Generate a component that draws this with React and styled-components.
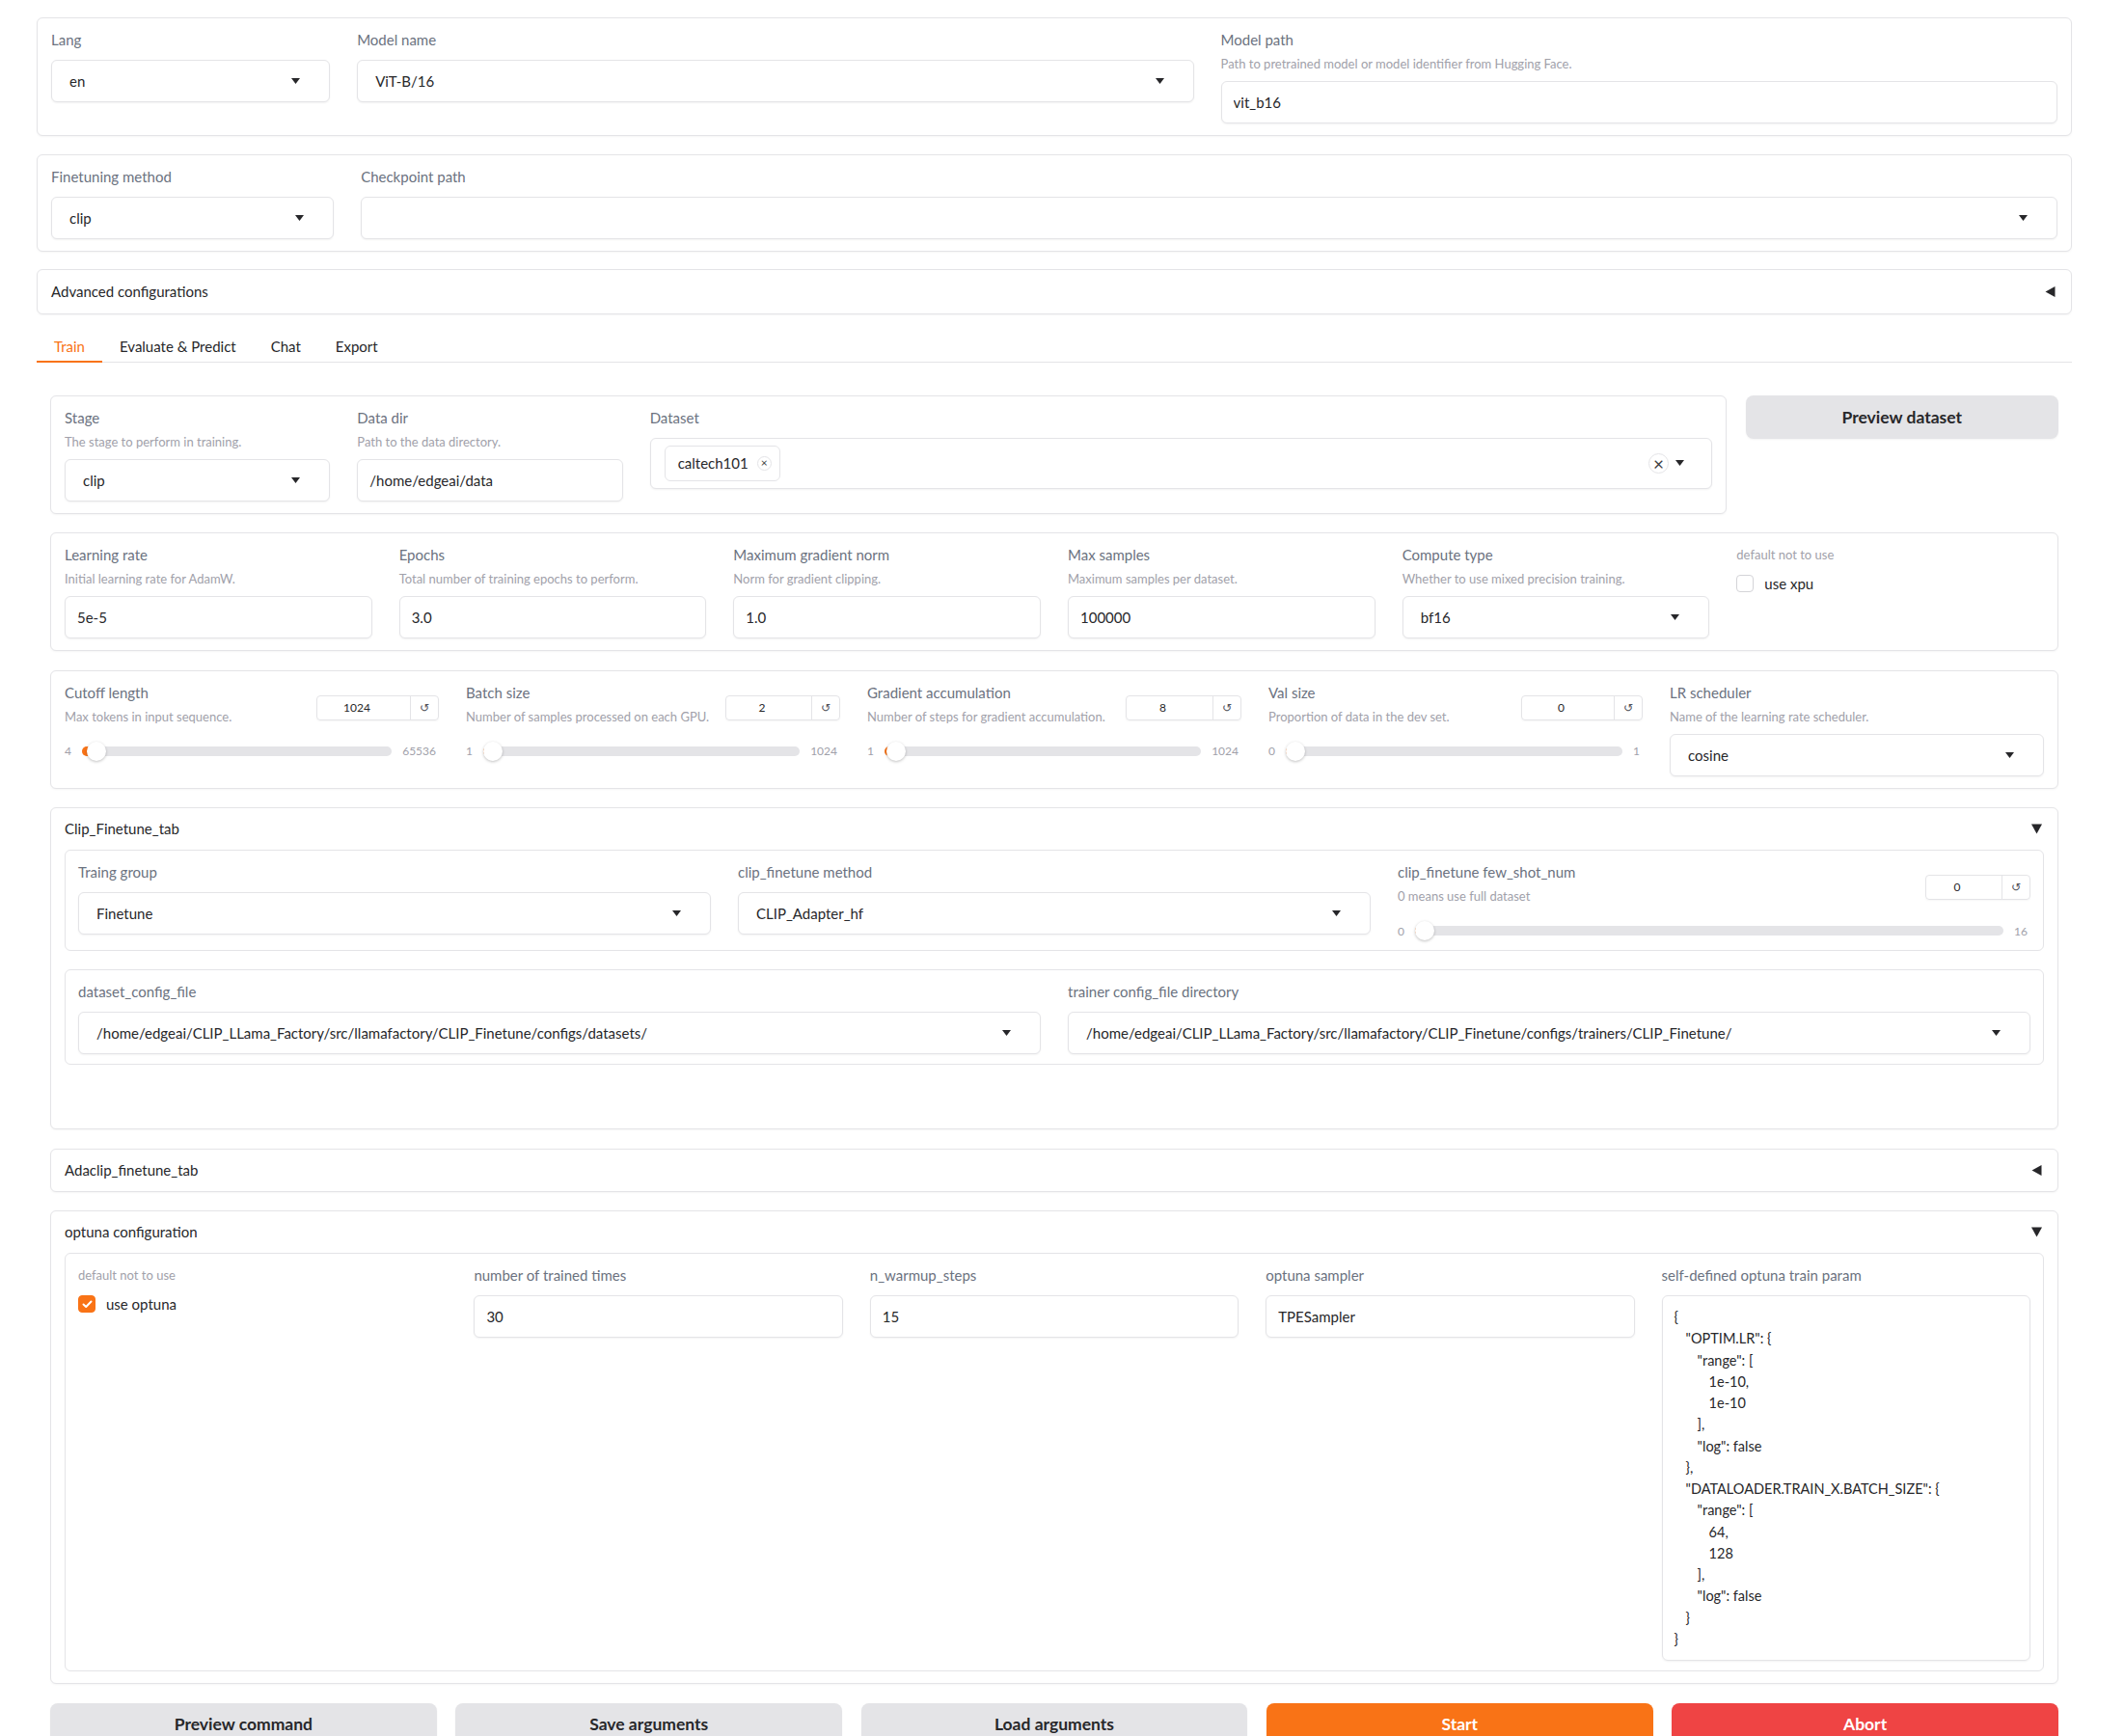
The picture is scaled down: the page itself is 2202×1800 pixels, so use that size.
import React from 'react';
import styled, { createGlobalStyle } from 'styled-components';

const colors = {
  border: '#e4e4e7',
  label: '#6b7280',
  info: '#a1a1aa',
  text: '#27272a',
  orange: '#f97316',
  red: '#ef4444',
  secondary: '#e4e4e7',
};

const GlobalStyle = createGlobalStyle`
  html, body {
    margin: 0;
    padding: 0;
    background: #fff;
  }
  body {
    font-family: Lato, "Liberation Sans", sans-serif;
    color: ${colors.text};
  }
  * {
    box-sizing: border-box;
  }
`;

const Page = styled.div`
  width: 2202px;
  padding: 18px 54px 30px 38px;
  display: flex;
  flex-direction: column;
  gap: 18.5px;
`;

const Panel = styled.div`
  background: #fff;
  border: 1px solid ${colors.border};
  border-radius: 6px;
  box-shadow: 0 1px 2px rgba(0, 0, 0, 0.04);
  padding: 12px 14px;
  display: grid;
  grid-template-columns: ${(p) => p.$cols};
  column-gap: 28px;
  align-items: start;
  flex: ${(p) => (p.$grow ? 1 : 'none')};
`;

const Field = styled.div`
  display: flex;
  flex-direction: column;
  min-width: 0;
`;

const Label = styled.div`
  font-size: ${(p) => (p.$faint ? 13 : 15)}px;
  line-height: 20px;
  color: ${(p) => (p.$faint ? colors.info : colors.label)};
  margin-bottom: ${(p) => (p.$info ? 7 : p.$faint ? 0 : 11)}px;
  white-space: nowrap;
`;

const Info = styled.div`
  font-size: 13px;
  line-height: 16px;
  color: ${colors.info};
  margin-bottom: 10px;
  white-space: nowrap;
`;

const InputBox = styled.div`
  height: 44px;
  background: #fff;
  border: 1px solid ${colors.border};
  border-radius: 6px;
  box-shadow: 0 1px 2px rgba(0, 0, 0, 0.05);
  display: flex;
  align-items: center;
  padding: ${(p) => (p.$select ? '0 30px 0 18px' : '0 12px')};
  font-size: 15px;
  color: ${colors.text};
  white-space: nowrap;
  overflow: hidden;
`;

const Value = styled.span`
  flex: 1;
  overflow: hidden;
  text-overflow: ellipsis;
`;

const MultiBox = styled(InputBox)`
  height: 53px;
  padding: 0 28px 0 14px;
  gap: 7px;
`;

const Chip = styled.div`
  height: 37px;
  display: flex;
  align-items: center;
  gap: 9px;
  padding: 0 8px 0 13px;
  border: 1px solid ${colors.border};
  border-radius: 6px;
  font-size: 15px;
`;

const RoundX = styled.span`
  width: ${(p) => p.$size}px;
  height: ${(p) => p.$size}px;
  border: 1px solid ${colors.border};
  border-radius: 50%;
  display: flex;
  align-items: center;
  justify-content: center;
  font-size: ${(p) => (p.$size > 16 ? 19 : 12)}px;
  line-height: 1;
  color: #3f3f46;
`;

const Spacer = styled.div`
  flex: 1;
`;

const Caret = () => (
  <svg width="9" height="6" viewBox="0 0 9 6">
    <polygon points="0,0 9,0 4.5,6" fill="#27272a" />
  </svg>
);

const TriWrap = styled.span`
  display: flex;
  transform: rotate(${(p) => (p.$open ? 0 : 90)}deg);
`;

const Tri = ({ open }) => (
  <TriWrap $open={open}>
    <svg width="11" height="11" viewBox="0 0 11 11">
      <polygon points="0,0.5 11,0.5 5.5,10.5" fill="#27272a" />
    </svg>
  </TriWrap>
);

const Accordion = styled.div`
  background: #fff;
  border: 1px solid ${colors.border};
  border-radius: 6px;
  box-shadow: 0 1px 2px rgba(0, 0, 0, 0.04);
`;

const AccHead = styled.div`
  display: flex;
  justify-content: space-between;
  align-items: center;
  padding: ${(p) => (p.$roomy ? 12 : 11)}px 16px ${(p) => (p.$roomy ? 12 : 11)}px 14px;
  font-size: 15px;
  line-height: 21px;
  color: ${colors.text};
`;

const AccBody = styled.div`
  padding: 0 14px 12px;
  display: flex;
  flex-direction: column;
  gap: 19px;
`;

const Group = styled.div`
  border: 1px solid ${colors.border};
  border-radius: 6px;
  padding: 12px 13px 10px;
  display: grid;
  grid-template-columns: ${(p) => p.$cols};
  column-gap: 28px;
  align-items: start;
`;

const Filler = styled.div`
  height: 35px;
`;

const Tabs = styled.div`
  display: flex;
  flex-direction: column;
`;

const TabBar = styled.div`
  display: flex;
  height: 31px;
  border-bottom: 1px solid ${colors.border};
`;

const Tab = styled.div`
  padding: 0 18px;
  height: 31px;
  line-height: 28px;
  font-size: 15px;
  color: ${(p) => (p.$active ? colors.orange : colors.text)};
  border-bottom: 2px solid ${(p) => (p.$active ? colors.orange : 'transparent')};
  margin-bottom: -1px;
`;

const TabPanel = styled.div`
  padding: 34px 14px 0 14px;
  display: flex;
  flex-direction: column;
  gap: 19.5px;
`;

const TopRow = styled.div`
  display: flex;
  gap: 19.5px;
  align-items: flex-start;
`;

const Button = styled.div`
  height: ${(p) => (p.$tall ? 45 : 44)}px;
  width: ${(p) => (p.$w ? `${p.$w}px` : 'auto')};
  border-radius: 8px;
  display: flex;
  align-items: center;
  justify-content: center;
  font-size: 17.5px;
  font-weight: 700;
  background: ${(p) =>
    p.$variant === 'primary' ? colors.orange : p.$variant === 'stop' ? colors.red : colors.secondary};
  color: ${(p) => (p.$variant ? '#fff' : colors.text)};
  box-shadow: 0 1px 2px rgba(0, 0, 0, 0.05);
`;

const ButtonRow = styled.div`
  display: grid;
  grid-template-columns: repeat(5, 1fr);
  gap: 19.5px;
`;

const SliderHead = styled.div`
  display: flex;
  justify-content: space-between;
  align-items: flex-start;
`;

const NumberBox = styled.div`
  margin-top: 13px;
  width: ${(p) => p.$w}px;
  height: 26px;
  display: flex;
  border: 1px solid ${colors.border};
  border-radius: 4px;
  box-shadow: 0 1px 2px rgba(0, 0, 0, 0.04);
`;

const NumValue = styled.span`
  flex: 1;
  text-align: center;
  font-size: 12px;
  line-height: 24px;
  padding-right: 14px;
  color: ${colors.text};
`;

const Reset = styled.span`
  width: 29px;
  border-left: 1px solid ${colors.border};
  display: flex;
  align-items: center;
  justify-content: center;
  font-family: "DejaVu Sans", sans-serif;
  font-size: 12px;
  color: #52525b;
`;

const SliderRow = styled.div`
  display: flex;
  align-items: center;
  gap: 11px;
  height: 20px;
  margin-top: 8px;
  padding-right: 3px;
`;

const Tick = styled.span`
  font-size: 12px;
  color: ${colors.info};
`;

const Track = styled.div`
  flex: 1;
  height: 10px;
  border-radius: 5px;
  background: ${colors.border};
  position: relative;
`;

const Fill = styled.div`
  position: absolute;
  left: 0;
  top: 0;
  bottom: 0;
  border-radius: 5px;
  background: ${colors.orange};
`;

const Thumb = styled.div`
  position: absolute;
  top: 50%;
  width: 20px;
  height: 20px;
  margin: -10px 0 0 -10px;
  border-radius: 50%;
  background: #fff;
  box-shadow: 0 1px 3px rgba(0, 0, 0, 0.25);
`;

const CheckRow = styled.div`
  display: flex;
  align-items: center;
  gap: 11px;
  margin-top: 10px;
  font-size: 15px;
  line-height: 20px;
  color: ${colors.text};
`;

const Box = styled.span`
  width: 18px;
  height: 18px;
  border-radius: 4px;
  display: flex;
  align-items: center;
  justify-content: center;
  background: ${(p) => (p.$checked ? colors.orange : '#fff')};
  border: 1px solid ${(p) => (p.$checked ? colors.orange : '#d4d4d8')};
`;

const TextArea = styled.div`
  height: 379px;
  border: 1px solid ${colors.border};
  border-radius: 6px;
  box-shadow: 0 1px 2px rgba(0, 0, 0, 0.05);
  padding: 11px 12px;
  font-size: 14.5px;
  color: ${colors.text};
`;

const CodeLine = styled.div`
  line-height: 22.25px;
  padding-left: ${(p) => p.$level * 12}px;
  white-space: pre;
`;

const Text = ({ label, info, value }) => (
  <Field>
    <Label $info={!!info}>{label}</Label>
    {info && <Info>{info}</Info>}
    <InputBox>
      <Value>{value}</Value>
    </InputBox>
  </Field>
);

const Select = ({ label, info, value }) => (
  <Field>
    <Label $info={!!info}>{label}</Label>
    {info && <Info>{info}</Info>}
    <InputBox $select>
      <Value>{value}</Value>
      <Caret />
    </InputBox>
  </Field>
);

const Slider = ({ label, info, value, min, max, boxWidth = 127 }) => {
  const pct = (value - min) / (max - min);
  const pos = `calc(10px + ${pct} * (100% - 20px))`;
  return (
    <Field>
      <SliderHead>
        <div>
          <Label $info>{label}</Label>
          <Info>{info}</Info>
        </div>
        <NumberBox $w={boxWidth}>
          <NumValue>{value}</NumValue>
          <Reset>↺</Reset>
        </NumberBox>
      </SliderHead>
      <SliderRow>
        <Tick>{min}</Tick>
        <Track>
          <Fill style={{ width: pos }} />
          <Thumb style={{ left: pos }} />
        </Track>
        <Tick>{max}</Tick>
      </SliderRow>
    </Field>
  );
};

const Check = ({ caption, label, checked }) => (
  <Field>
    <Label $faint>{caption}</Label>
    <CheckRow>
      <Box $checked={checked}>
        {checked && (
          <svg width="11" height="9" viewBox="0 0 11 9">
            <polyline points="1.5,4.5 4.2,7 9.5,1.5" fill="none" stroke="#fff" strokeWidth="2" strokeLinecap="round" strokeLinejoin="round" />
          </svg>
        )}
      </Box>
      {label}
    </CheckRow>
  </Field>
);

const optunaParams = [
  [0, '{'],
  [1, '"OPTIM.LR": {'],
  [2, '"range": ['],
  [3, '1e-10,'],
  [3, '1e-10'],
  [2, '],'],
  [2, '"log": false'],
  [1, '},'],
  [1, '"DATALOADER.TRAIN_X.BATCH_SIZE": {'],
  [2, '"range": ['],
  [3, '64,'],
  [3, '128'],
  [2, '],'],
  [2, '"log": false'],
  [1, '}'],
  [0, '}'],
];

const App = () => {
  return (
    <>
      <GlobalStyle />
      <Page>
        <Panel $cols="1fr 3fr 3fr">
          <Select label="Lang" value="en" />
          <Select label="Model name" value="ViT-B/16" />
          <Text
            label="Model path"
            info="Path to pretrained model or model identifier from Hugging Face."
            value="vit_b16"
          />
        </Panel>

        <Panel $cols="1fr 6fr">
          <Select label="Finetuning method" value="clip" />
          <Select label="Checkpoint path" value="" />
        </Panel>

        <Accordion>
          <AccHead $roomy>
            Advanced configurations
            <Tri open={false} />
          </AccHead>
        </Accordion>

        <Tabs>
          <TabBar>
            <Tab $active>Train</Tab>
            <Tab>Evaluate &amp; Predict</Tab>
            <Tab>Chat</Tab>
            <Tab>Export</Tab>
          </TabBar>

          <TabPanel>
            <TopRow>
              <Panel $grow $cols="1fr 1fr 4fr">
                <Select label="Stage" info="The stage to perform in training." value="clip" />
                <Text label="Data dir" info="Path to the data directory." value="/home/edgeai/data" />
                <Field>
                  <Label>Dataset</Label>
                  <MultiBox>
                    <Chip>
                      caltech101
                      <RoundX $size={15}>×</RoundX>
                    </Chip>
                    <Spacer />
                    <RoundX $size={21}>×</RoundX>
                    <Caret />
                  </MultiBox>
                </Field>
              </Panel>
              <Button $tall $w={324.5}>Preview dataset</Button>
            </TopRow>

            <Panel $cols="repeat(6, 1fr)">
              <Text label="Learning rate" info="Initial learning rate for AdamW." value="5e-5" />
              <Text label="Epochs" info="Total number of training epochs to perform." value="3.0" />
              <Text label="Maximum gradient norm" info="Norm for gradient clipping." value="1.0" />
              <Text label="Max samples" info="Maximum samples per dataset." value="100000" />
              <Select label="Compute type" info="Whether to use mixed precision training." value="bf16" />
              <Check caption="default not to use" label="use xpu" />
            </Panel>

            <Panel $cols="repeat(5, 1fr)">
              <Slider label="Cutoff length" info="Max tokens in input sequence." value={1024} min={4} max={65536} boxWidth={127} />
              <Slider label="Batch size" info="Number of samples processed on each GPU." value={2} min={1} max={1024} boxWidth={119} />
              <Slider label="Gradient accumulation" info="Number of steps for gradient accumulation." value={8} min={1} max={1024} boxWidth={120} />
              <Slider label="Val size" info="Proportion of data in the dev set." value={0} min={0} max={1} boxWidth={126} />
              <Select label="LR scheduler" info="Name of the learning rate scheduler." value="cosine" />
            </Panel>

            <Accordion>
              <AccHead>
                Clip_Finetune_tab
                <Tri open />
              </AccHead>
              <AccBody>
                <Group $cols="repeat(3, 1fr)">
                  <Select label="Traing group" value="Finetune" />
                  <Select label="clip_finetune method" value="CLIP_Adapter_hf" />
                  <Slider label="clip_finetune few_shot_num" info="0 means use full dataset" value={0} min={0} max={16} boxWidth={109} />
                </Group>
                <Group $cols="1fr 1fr">
                  <Select label="dataset_config_file" value="/home/edgeai/CLIP_LLama_Factory/src/llamafactory/CLIP_Finetune/configs/datasets/" />
                  <Select label="trainer config_file directory" value="/home/edgeai/CLIP_LLama_Factory/src/llamafactory/CLIP_Finetune/configs/trainers/CLIP_Finetune/" />
                </Group>
                <Filler />
              </AccBody>
            </Accordion>

            <Accordion>
              <AccHead>
                Adaclip_finetune_tab
                <Tri open={false} />
              </AccHead>
            </Accordion>

            <Accordion>
              <AccHead>
                optuna configuration
                <Tri open />
              </AccHead>
              <AccBody>
                <Group $cols="repeat(5, 1fr)">
                  <Check caption="default not to use" label="use optuna" checked />
                  <Text label="number of trained times" value="30" />
                  <Text label="n_warmup_steps" value="15" />
                  <Text label="optuna sampler" value="TPESampler" />
                  <Field>
                    <Label>self-defined optuna train param</Label>
                    <TextArea>
                      {optunaParams.map(([level, line], i) => (
                        <CodeLine key={i} $level={level}>{line}</CodeLine>
                      ))}
                    </TextArea>
                  </Field>
                </Group>
              </AccBody>
            </Accordion>

            <ButtonRow>
              <Button>Preview command</Button>
              <Button>Save arguments</Button>
              <Button>Load arguments</Button>
              <Button $variant="primary">Start</Button>
              <Button $variant="stop">Abort</Button>
            </ButtonRow>
          </TabPanel>
        </Tabs>
      </Page>
    </>
  );
};

export default App;
